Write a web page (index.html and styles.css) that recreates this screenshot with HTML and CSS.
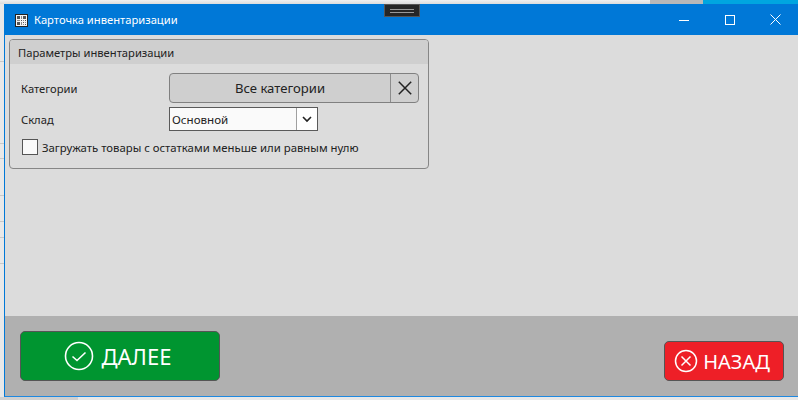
FILE: index.html
```html
<!DOCTYPE html>
<html lang="ru">
<head>
<meta charset="utf-8">
<title>Карточка инвентаризации</title>
<link rel="stylesheet" href="styles.css">
</head>
<body>
<div class="backdrop">
  <div class="strip"><span class="strip-fill"></span><span class="strip-gray"></span><span class="strip-blue"></span></div>
  <div class="window">
    <header class="titlebar">
      <svg class="app-icon" width="13" height="13" viewBox="0 0 13 13"><rect x="0.5" y="0.5" width="12" height="12" fill="#f4f4f4" stroke="#222"/><path d="M2 2h3v3H2zM8 2h3v3H8zM2 8h3v3H2zM6 6h1v1H6zM8 8h1v1H8zM10 10h1v1h-1zM10 6h1v1h-1z" fill="#555"/><path d="M6 2h1v3H6zM2 6h3v1H2zM8 6h1v1H8zM6 8h1v3H6zM8 10h1v1H8zM10 8h1v1h-1z" fill="#8a8a8a"/></svg>
      <span class="title">Карточка инвентаризации</span>
      <div class="win-controls">
        <span class="win-btn"><svg width="10" height="10" viewBox="0 0 10 10"><path d="M0 5.5h10" stroke="#fff" fill="none"/></svg></span>
        <span class="win-btn"><svg width="10" height="10" viewBox="0 0 10 10"><rect x="0.5" y="0.5" width="9" height="9" stroke="#fff" fill="none"/></svg></span>
        <span class="win-btn"><svg width="11" height="11" viewBox="0 0 11 11"><path d="M.5.5l10 10M10.5.5l-10 10" stroke="#fff" fill="none"/></svg></span>
      </div>
    </header>
    <main class="content">
      <section class="group">
        <h2 class="group-head">Параметры инвентаризации</h2>
        <div class="group-body">
          <div class="row row-cat">
            <span class="label">Категории</span>
            <div class="picker">
              <span class="picker-text">Все категории</span>
              <span class="picker-clear"><svg width="14" height="14" viewBox="0 0 14 14"><path d="M.8.8l12.4 12.4M13.2.8L.8 13.2" stroke="#222" stroke-width="1.5" fill="none"/></svg></span>
            </div>
          </div>
          <div class="row row-store">
            <span class="label">Склад</span>
            <div class="select">
              <span class="select-text">Основной</span>
              <span class="select-arrow"><svg width="10" height="7" viewBox="0 0 10 7"><path d="M1 1l4 4 4-4" stroke="#222" stroke-width="1.6" fill="none"/></svg></span>
            </div>
          </div>
          <label class="check-row">
            <span class="check"></span>
            <span class="check-text">Загружать товары с остатками меньше или равным нулю</span>
          </label>
        </div>
      </section>
    </main>
    <footer class="footer">
      <button class="btn btn-next" type="button">
        <svg width="30" height="30" viewBox="0 0 30 30"><circle cx="15" cy="15" r="13.5" stroke="#fff" stroke-width="1.6" fill="none"/><path d="M8.5 15.5l4.5 4 8.5-8" stroke="#fff" stroke-width="1.6" fill="none"/></svg>
        <span>ДАЛЕЕ</span>
      </button>
      <button class="btn btn-back" type="button">
        <svg width="24" height="24" viewBox="0 0 24 24"><circle cx="12" cy="12" r="10.5" stroke="#fff" stroke-width="1.5" fill="none"/><path d="M7.5 7.5l9 9M16.5 7.5l-9 9" stroke="#fff" stroke-width="1.5" fill="none"/></svg>
        <span>НАЗАД</span>
      </button>
    </footer>
  </div>
  <div class="grip"><span class="grip-lines"></span></div>
  <div class="shadow-foot"></div>
</div>
</body>
</html>
```

FILE: styles.css
```css
* { box-sizing: border-box; }
html, body { margin: 0; padding: 0; }
body {
  width: 798px;
  height: 400px;
  overflow: hidden;
  background: #e4e4e4;
  font-family: "Noto Sans", "Open Sans", sans-serif;
  font-size: 11.2px;
  color: #222;
}
.backdrop {
  position: relative;
  width: 798px;
  height: 400px;
  display: flex;
  flex-direction: column;
  background-color: #e8e8e8;
  background-image:
    linear-gradient(#c8c8c8, #c8c8c8), linear-gradient(#c8c8c8, #c8c8c8),
    linear-gradient(#c8c8c8, #c8c8c8), linear-gradient(#c8c8c8, #c8c8c8),
    linear-gradient(#c8c8c8, #c8c8c8), linear-gradient(#c8c8c8, #c8c8c8),
    linear-gradient(#c8c8c8, #c8c8c8);
  background-repeat: no-repeat;
  background-size: 4px 1px;
  background-position: 0 61px, 0 143px, 0 158px, 0 195px, 0 221px, 0 237px, 0 263px;
}
.strip { display: flex; height: 4px; flex: none; }
.strip-fill { width: 650px; background: linear-gradient(#f0f0f0, #dcdcdc); }
.strip-gray { width: 53px; background: #b8b8b8; }
.strip-blue { flex: 1; background: #00a6e0; }
.window {
  margin-left: 4px;
  height: 393px;
  flex: none;
  display: flex;
  flex-direction: column;
  border-left: 1px solid #0078d7;
  border-bottom: 1px solid #1e88e0;
}
.titlebar {
  height: 31px;
  flex: none;
  background: #0078d7;
  color: #fff;
  display: flex;
  align-items: center;
  padding-left: 10px;
}
.app-icon { flex: none; margin-top: 1px; }
.title { margin-left: 6px; }
.win-controls { margin-left: auto; display: flex; }
.win-btn {
  width: 45.5px;
  height: 31px;
  display: flex;
  align-items: center;
  justify-content: center;
}
.content {
  flex: 1;
  background: #dcdcdc;
  padding: 4px 369px 0 4px;
}
.group {
  height: 130px;
  border: 1px solid #868686;
  border-radius: 4px;
  overflow: hidden;
}
.group-head {
  margin: 0;
  height: 24px;
  padding-left: 8px;
  background: #cfcfcf;
  font-size: 11.2px;
  font-weight: 400;
  line-height: 26px;
}
.group-body { padding: 9px 9px 0 11px; }
.row { display: flex; align-items: center; }
.label { width: 148px; flex: none; }
.row-cat { height: 30px; }
.picker {
  width: 250px;
  height: 30px;
  display: flex;
  background: #cfcfcf;
  border: 1px solid #808080;
  border-radius: 4px;
}
.picker-text {
  flex: 1;
  text-align: center;
  line-height: 29px;
  font-size: 13.1px;
}
.picker-clear {
  width: 28px;
  border-left: 1px solid #8c8c8c;
  display: flex;
  align-items: center;
  justify-content: center;
}
.row-store { height: 24px; margin-top: 4px; }
.select {
  width: 149px;
  height: 24px;
  display: flex;
  background: #fafafa;
  border: 1px solid #5a5a5a;
}
.select-text { flex: 1; line-height: 23px; padding-left: 2px; font-size: 11.6px; }
.select-arrow {
  width: 21px;
  border-left: 1px solid #a0a0a0;
  background: #fff;
  display: flex;
  align-items: center;
  justify-content: center;
}
.check-row { display: flex; align-items: center; margin-top: 7px; height: 18px; }
.check {
  width: 16px;
  height: 16px;
  margin-left: 1px;
  border: 1px solid #555;
  background: #fafafa;
  flex: none;
}
.check-text { margin-left: 4px; font-size: 11.35px; }
.footer {
  height: 80px;
  flex: none;
  background: #b0b0b0;
  display: flex;
  justify-content: space-between;
  align-items: flex-end;
  padding: 0 14px 15px 15px;
}
.btn {
  border: 1px solid #555;
  border-radius: 5px;
  color: #fff;
  display: flex;
  align-items: center;
  justify-content: center;
  font-family: inherit;
  padding: 0;
}
.btn-next {
  width: 200px;
  height: 50px;
  background: #009530;
  font-size: 22px;
  gap: 8px;
  padding-right: 5px;
}
.btn-back {
  width: 120px;
  height: 40px;
  background: #ee1f27;
  font-size: 20px;
  gap: 5px;
  padding-right: 4px;
}
.grip {
  position: absolute;
  left: 384px;
  top: 4px;
  width: 36px;
  height: 13px;
  background: #262626;
  border: 1px solid #555;
  display: flex;
  align-items: center;
  justify-content: center;
}
.grip-lines {
  width: 24px;
  height: 4px;
  border-top: 1px solid #999;
  border-bottom: 1px solid #999;
}
.shadow-foot {
  position: absolute;
  left: 0;
  bottom: 0;
  width: 78px;
  height: 3px;
  background: #d0d0d0;
}
```
